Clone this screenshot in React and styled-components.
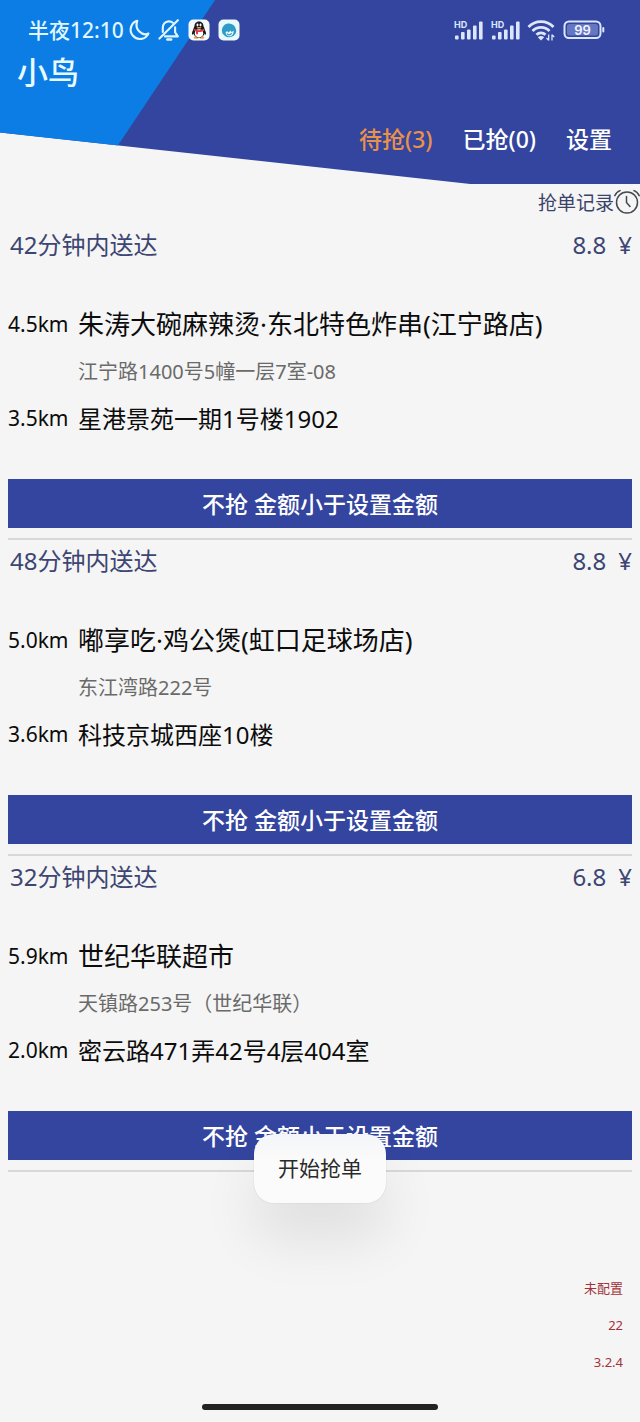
import styled, { createGlobalStyle } from "styled-components";

const orders = [
  {
    id: 1,
    time: "42分钟内送达",
    price: "8.8",
    shopDistance: "4.5km",
    shop: "朱涛大碗麻辣烫·东北特色炸串(江宁路店)",
    address: "江宁路1400号5幢一层7室-08",
    customerDistance: "3.5km",
    customer: "星港景苑一期1号楼1902",
  },
  {
    id: 2,
    time: "48分钟内送达",
    price: "8.8",
    shopDistance: "5.0km",
    shop: "嘟享吃·鸡公煲(虹口足球场店)",
    address: "东江湾路222号",
    customerDistance: "3.6km",
    customer: "科技京城西座10楼",
  },
  {
    id: 3,
    time: "32分钟内送达",
    price: "6.8",
    shopDistance: "5.9km",
    shop: "世纪华联超市",
    address: "天镇路253号（世纪华联）",
    customerDistance: "2.0km",
    customer: "密云路471弄42号4层404室",
  },
];

const MoonIcon = () => (
  <svg width="22" height="22" viewBox="0 0 22 22" fill="none" stroke="#dff6ff" strokeWidth="2.2" strokeLinejoin="round">
    <path d="M9.2 1.8A9.3 9.3 0 1 0 20.4 14.6C14.2 17.2 6.2 10.8 9.2 1.8z" />
  </svg>
);

const MutedIcon = () => (
  <svg width="22" height="22" viewBox="0.5 0.8 22.500 22.500" fill="none" stroke="#dff6ff" strokeWidth="2.2" strokeLinecap="round" strokeLinejoin="round">
    <path d="M5.400 14V9.800C5.400 5.800 8 3.400 11.300 3.200c2-.1 3.300.4 4.400 1.400" />
    <path d="M18 9.200v5.200l2.800 4.200H7.600" />
    <path d="M20.800 2L2 20.800" />
    <path d="M10 21.800h4" strokeWidth="2.400" />
  </svg>
);

const PenguinIcon = () => (
  <svg width="22" height="22" viewBox="0 0 22 22">
    <rect x=".5" y=".5" width="21" height="21" rx="5" fill="#f6fafc" />
    <path d="M6 10C4.2 12 3.6 14.4 4.2 15.6c.6.4 1.4-.8 1.8-1.4M16 10c1.8 2 2.4 4.4 1.8 5.6-.6.4-1.4-.8-1.8-1.4" fill="#16181d" />
    <ellipse cx="8.2" cy="18.6" rx="2.6" ry="1.2" fill="#eda03c" />
    <ellipse cx="13.8" cy="18.6" rx="2.6" ry="1.2" fill="#eda03c" />
    <path d="M11 2.4c-3.2 0-4.6 2.4-4.6 5.2C5 10 4.9 12.6 5.4 14.4 6.2 17 8.4 18.6 11 18.6s4.800-1.600 5.600-4.200c.5-1.800.4-4.400-1-6.800 0-2.800-1.400-5.200-4.600-5.200z" fill="#16181d" />
    <ellipse cx="11" cy="14.2" rx="4.200" ry="4" fill="#fff" />
    <ellipse cx="9.500" cy="6" rx="1" ry="1.400" fill="#fff" />
    <ellipse cx="12.500" cy="6" rx="1" ry="1.400" fill="#fff" />
    <ellipse cx="11" cy="8.700" rx="2.500" ry=".8" fill="#edae45" />
    <path d="M6.200 9.800c3 1.800 6.600 1.800 9.600 0l.5 1.900c-2 1-4 1.400-6.300 1.300v2.200H8v-2.600l-2.200-1z" fill="#dc3c44" />
  </svg>
);

const BirdIcon = () => (
  <svg width="22" height="22" viewBox="0 0 22 22">
    <rect x=".5" y=".5" width="21" height="21" rx="5" fill="#e9fafd" />
    <path d="M4.400 14.500A7.200 7.200 0 1 1 18.200 11.500c0 3.400-2.400 6-5.600 6.600-2 .3-4.600-.2-5.600-1.200z" fill="#2e9cc6" />
    <path d="M7.600 13l1.800-.8 1 1.400 2.400-2.200.8 1.800 2-1.800c.3 3.800-1.600 5.800-4.400 5.800-2.200 0-3.600-1.600-3.600-4.200z" fill="#e9fafd" />
    <path d="M9.400 15c1.200 1 2.800 1 4-.4" fill="none" stroke="#2e9cc6" strokeWidth="1.200" strokeLinecap="round" />
  </svg>
);

const SignalIcon = () => (
  <svg width="31" height="20" viewBox="0 0 31 20" fill="#dce6ff">
    <text x="1" y="7.500" fontFamily="Inter, sans-serif" fontSize="9" fontWeight="700">HD</text>
    <rect x="2" y="15.500" width="3.600" height="4" rx="1" />
    <rect x="8" y="12" width="3.600" height="7.500" rx="1" />
    <rect x="14" y="9.500" width="3.600" height="10" rx="1" />
    <rect x="20" y="5.500" width="3.600" height="14" rx="1" />
    <rect x="26" y="1.500" width="3.600" height="18" rx="1" />
  </svg>
);

const WifiIcon = () => (
  <svg width="30" height="22" viewBox="0 0 30 22" fill="none" stroke="#dce6ff" strokeWidth="2.800">
    <path d="M1.500 8C8.400.7 19.600.7 26.500 8" />
    <path d="M5.500 12c4.700-4.900 12.300-4.900 17 0" />
    <path d="M9.500 15.800c2.500-2.700 6.500-2.700 9 0" />
    <path d="M10.800 18.200c1.900-1.700 4.500-1.700 6.400 0L14 21.400z" fill="#dce6ff" stroke="none" />
    <path d="M21.700 15.500v6M21.700 21.200l-2.200-2.200M25 21.500v-6M25 15.800l2.200 2.200" strokeWidth="1.300" />
  </svg>
);

const BatteryIcon = () => (
  <svg width="42" height="20" viewBox="0 0 42 20">
    <rect x="1.500" y="1.500" width="36" height="16.500" rx="4.500" fill="none" stroke="#dce6ff" strokeWidth="2" />
    <rect x="4" y="4" width="31" height="11.500" rx="2.500" fill="#6677c2" />
    <rect x="39.300" y="7" width="2" height="5.500" rx="1" fill="#dce6ff" />
    <text x="19.500" y="14.500" textAnchor="middle" fontFamily="Inter, sans-serif" fontSize="13" fontWeight="600" fill="#f0f4ff">99</text>
  </svg>
);

const ClockIcon = () => (
  <svg width="26" height="26" viewBox="0 0 26 26" fill="none" stroke="#454850" strokeWidth="1.500" strokeLinecap="round">
    <circle cx="13" cy="13.500" r="10.500" />
    <path d="M12.500 7.500v6l3.500 4" />
    <path d="M.800 6.600C1.800 4.400 3.600 2.400 6 1.600M25.200 6.600C24.200 4.400 22.400 2.400 20 1.600" />
  </svg>
);

const Order = ({ order }) => (
  <OrderItem>
    <OrderTop>
      <span>{order.time}</span>
      <Price>
        <span>{order.price}</span>
        <span>¥</span>
      </Price>
    </OrderTop>
    <Route>
      <Distance>{order.shopDistance}</Distance>
      <ShopName>{order.shop}</ShopName>
      <Address>{order.address}</Address>
      <Distance>{order.customerDistance}</Distance>
      <Customer>{order.customer}</Customer>
    </Route>
    <GrabButton type="button">不抢 金额小于设置金额</GrabButton>
  </OrderItem>
);

const App = () => {
  return (
    <>
      <GlobalStyle />
      <Page>
        <Header>
          <StatusBar>
            <StatusGroup>
              <Clock>半夜12:10</Clock>
              <MoonIcon />
            </StatusGroup>
            <Notices>
              <MutedIcon />
              <PenguinIcon />
              <BirdIcon />
            </Notices>
            <Radios>
              <SignalIcon />
              <SignalIcon />
              <WifiIcon />
              <BatteryIcon />
            </Radios>
          </StatusBar>
          <Title>小鸟</Title>
          <Tabs>
            <Tab type="button" $active>待抢(3)</Tab>
            <Tab type="button">已抢(0)</Tab>
            <Tab type="button">设置</Tab>
          </Tabs>
        </Header>
        <RecordBar>
          <RecordLink href="#records">
            抢单记录
            <ClockIcon />
          </RecordLink>
        </RecordBar>
        <OrderList>
          {orders.map((order) => (
            <Order key={order.id} order={order} />
          ))}
        </OrderList>
        <Info>
          <p>未配置</p>
          <p>22</p>
          <p>3.2.4</p>
        </Info>
        <HomeBar />
        <Toast role="status">开始抢单</Toast>
      </Page>
    </>
  );
};

export default App;

const GlobalStyle = createGlobalStyle`
  * {
    box-sizing: border-box;
    margin: 0;
    padding: 0;
  }

  body {
    background: #f5f5f5;
    font-family: "Noto Sans", "Noto Sans CJK SC", sans-serif;
  }

  button {
    border: none;
    background: none;
    font-family: inherit;
    cursor: pointer;
  }

  svg {
    display: block;
    flex-shrink: 0;
  }
`;

const Page = styled.div`
  position: relative;
  display: flex;
  flex-direction: column;
  min-height: 100vh;
  background: #f5f5f5;
`;

const Header = styled.header`
  position: relative;
  z-index: 0;
  background: #33459e;
  color: #fff;
  clip-path: polygon(0 0, 100% 0, 100% 100%, 73.5% 100%, 0 72%);

  &::before {
    content: "";
    position: absolute;
    inset: 0;
    z-index: -1;
    background: #0c7de4;
    clip-path: polygon(0 0, 33.6% 0, 14.4% 100%, 0 100%);
  }
`;

const StatusBar = styled.div`
  display: flex;
  align-items: center;
  height: 46px;
  padding: 14px 35px 0 28px;
`;

const StatusGroup = styled.div`
  display: flex;
  align-items: center;
  gap: 4px;
`;

const Clock = styled.span`
  font-size: 21px;
  line-height: 32px;
  font-weight: 500;
  color: #dff6ff;
`;

const Notices = styled(StatusGroup)`
  gap: 8px;
  margin-left: 8px;
`;

const Radios = styled(StatusGroup)`
  gap: 6px;
  margin-left: auto;
`;

const Title = styled.h1`
  padding-left: 17px;
  font-size: 31px;
  line-height: 52px;
  font-weight: 500;
  color: #e8fbff;
`;

const Tabs = styled.nav`
  display: flex;
  justify-content: flex-end;
  gap: 30px;
  padding: 24px 28px 28px;
`;

const Tab = styled.button`
  font-size: 23px;
  line-height: 34px;
  font-weight: 500;
  color: ${(p) => (p.$active ? "#e8914a" : "#fff")};
`;

const RecordBar = styled.div`
  display: flex;
  justify-content: flex-end;
  height: 40px;
`;

const RecordLink = styled.a`
  display: flex;
  align-items: center;
  height: 36px;
  font-size: 19px;
  color: #3a4368;
  text-decoration: none;
`;

const OrderList = styled.main`
  padding: 0 8px;
`;

const OrderItem = styled.article`
  padding-bottom: 10px;
  border-bottom: 2px solid #d8d8da;
`;

const OrderTop = styled.div`
  display: flex;
  justify-content: space-between;
  padding-left: 2px;
  font-size: 24px;
  line-height: 42px;
  color: #3d4672;
`;

const Price = styled.div`
  display: flex;
  gap: 12px;
`;

const Route = styled.div`
  display: grid;
  grid-template-columns: 70px 1fr;
  margin: 35px 0 37px;
  line-height: 47px;
  color: #0c0c0c;
`;

const Distance = styled.span`
  font-size: 21px;
`;

const ShopName = styled.h2`
  font-size: 26px;
  font-weight: 400;
`;

const Address = styled.p`
  grid-column: 2;
  font-size: 20px;
  color: #6a6a6a;
`;

const Customer = styled.p`
  font-size: 24px;
`;

const GrabButton = styled.button`
  display: block;
  width: 100%;
  height: 49px;
  padding-bottom: 2px;
  background: #33459e;
  font-size: 23px;
  font-weight: 500;
  color: #fff;
`;

const Info = styled.div`
  margin-top: auto;
  padding: 0 17px 23px;
  font-size: 13px;
  line-height: 37px;
  text-align: right;
  color: #a3323a;
`;

const HomeBar = styled.div`
  width: 37%;
  height: 6px;
  margin: 0 auto 12px;
  border-radius: 3px;
  background: #222;
`;

const Toast = styled.div`
  position: absolute;
  bottom: 219px;
  left: 50%;
  transform: translateX(-50%);
  padding: 0 24px;
  border-radius: 20px;
  background: linear-gradient(#f4f5f8, #fbfbfb 40%);
  box-shadow: 0 0 1px rgba(0, 0, 0, 0.3), 0 36px 56px rgba(0, 0, 0, 0.09);
  font-size: 21px;
  line-height: 69px;
  white-space: nowrap;
  color: #2a2a2a;
`;
